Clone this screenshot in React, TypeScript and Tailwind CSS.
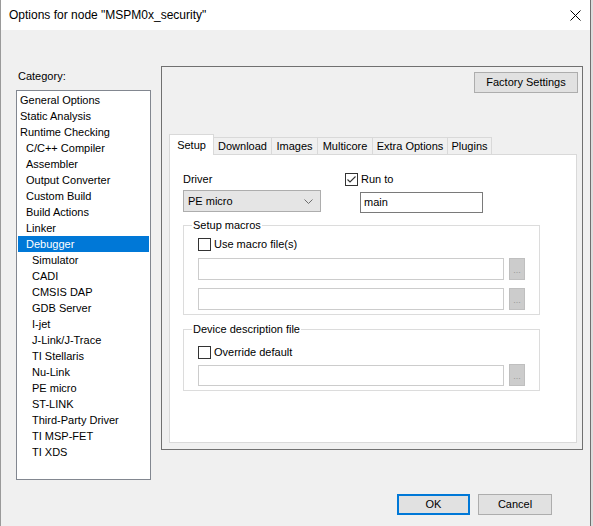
import React from 'react';

const categories: { label: string; level: number }[] = [
    { label: 'General Options', level: 0 },
    { label: 'Static Analysis', level: 0 },
    { label: 'Runtime Checking', level: 0 },
    { label: 'C/C++ Compiler', level: 1 },
    { label: 'Assembler', level: 1 },
    { label: 'Output Converter', level: 1 },
    { label: 'Custom Build', level: 1 },
    { label: 'Build Actions', level: 1 },
    { label: 'Linker', level: 1 },
    { label: 'Debugger', level: 1 },
    { label: 'Simulator', level: 2 },
    { label: 'CADI', level: 2 },
    { label: 'CMSIS DAP', level: 2 },
    { label: 'GDB Server', level: 2 },
    { label: 'I-jet', level: 2 },
    { label: 'J-Link/J-Trace', level: 2 },
    { label: 'TI Stellaris', level: 2 },
    { label: 'Nu-Link', level: 2 },
    { label: 'PE micro', level: 2 },
    { label: 'ST-LINK', level: 2 },
    { label: 'Third-Party Driver', level: 2 },
    { label: 'TI MSP-FET', level: 2 },
    { label: 'TI XDS', level: 2 },
];

const tabs = [
    { label: 'Setup', w: 'w-[45px]' },
    { label: 'Download', w: 'w-[58px]' },
    { label: 'Images', w: 'w-[46px]' },
    { label: 'Multicore', w: 'w-[55px]' },
    { label: 'Extra Options', w: 'w-[75px]' },
    { label: 'Plugins', w: 'w-[44px]' },
];

const indent = ['pl-[2px]', 'pl-[8px]', 'pl-[14px]'];

const CheckBox: React.FC<{ checked?: boolean; label: string }> = ({ checked, label }) => (
    <div className="flex items-center h-[13px]">
        <div className="w-[13px] h-[13px] border border-[#333333] bg-white flex items-center justify-center">
            {checked && (
                <svg width="11" height="11" viewBox="0 0 11 11">
                    <path d="M1.5 5.5 L4 8 L9.5 2.5" fill="none" stroke="#333333" strokeWidth="1.1" />
                </svg>
            )}
        </div>
        <span className="ml-[3px] leading-[13px]">{label}</span>
    </div>
);

const BrowseRow: React.FC<{ h?: string }> = ({ h = 'h-[22px]' }) => (
    <div className="flex items-center">
        <div className={`w-[306px] ${h} border border-[#cccccc] bg-white`}></div>
        <div className="ml-[5px] w-[16px] h-[22px] border border-[#bfbfbf] bg-[#cccccc] flex items-end justify-center pb-[4px] text-[9px] leading-none text-[#9a9a9a]">
            ...
        </div>
    </div>
);

const App: React.FC = () => {
    return (
        <div className="w-[593px] h-[526px] bg-[#dcdcdc] font-['Liberation_Sans',Arial,sans-serif] text-[11px] text-black">
            <div className="w-[591px] h-full border-l border-l-[#9a9a9a] border-r border-r-[#6f6f6f] flex flex-col">
                {/* title bar */}
                <div className="h-[30px] bg-white flex items-center justify-between pl-[8px] pr-[9px]">
                    <span className="text-[12px]">Options for node "MSPM0x_security"</span>
                    <svg width="11" height="11" viewBox="0 0 11 11">
                        <path d="M0.5 0.5 L10.5 10.5 M10.5 0.5 L0.5 10.5" stroke="#000" strokeWidth="1" />
                    </svg>
                </div>

                <div className="flex-1 bg-[#f0f0f0] pt-[36px] pl-[15px] flex flex-col">
                    <div className="flex items-start">
                        {/* category list */}
                        <div className="w-[135px] flex flex-col">
                            <div className="mt-[3px] leading-[14px] h-[14px] pl-[2px]">Category:</div>
                            <div className="mt-[7px] h-[390px] border border-[#828790] bg-white p-[1px]">
                                {categories.map(c => (
                                    <div
                                        key={c.label}
                                        className={`h-[16px] leading-[16px] whitespace-nowrap ${indent[c.level]} ${c.label === 'Debugger' ? 'bg-[#0078d7] text-white' : ''}`}
                                    >
                                        {c.label}
                                    </div>
                                ))}
                            </div>
                        </div>

                        {/* options panel */}
                        <div className="ml-[10px] w-[422px] h-[384px] border border-[#707070] flex flex-col">
                            <div className="flex justify-end pr-[4px] mt-[5px]">
                                <div className="w-[104px] h-[21px] border border-[#adadad] bg-[#e1e1e1] flex items-center justify-center">
                                    Factory Settings
                                </div>
                            </div>

                            <div className="mt-[41px] pl-[7px]">
                                <div className="flex items-end h-[20px] relative z-10">
                                    {tabs.map((t, i) => (
                                        <div
                                            key={t.label}
                                            className={`${t.w} flex items-center justify-center leading-[13px] ${
                                                i === 0
                                                    ? 'h-[21px] -mb-px bg-white border-l border-t border-r border-[#d9d9d9]'
                                                    : 'h-[17px] bg-[#f0f0f0] border-t border-r border-[#d9d9d9]'
                                            }`}
                                        >
                                            {t.label}
                                        </div>
                                    ))}
                                </div>

                                <div className="w-[408px] h-[289px] border border-[#d9d9d9] bg-white pl-[13px] pt-[18px]">
                                    <div className="flex items-start">
                                        <div className="w-[138px] flex flex-col">
                                            <div className="h-[13px] leading-[13px]">Driver</div>
                                            <div className="mt-[4px] h-[22px] border border-[#adadad] bg-[#e5e5e5] flex items-center justify-between pl-[4px] pr-[7px]">
                                                <span>PE micro</span>
                                                <svg width="9" height="5" viewBox="0 0 9 5">
                                                    <path d="M0.5 0.5 L4.5 4.5 L8.5 0.5" fill="none" stroke="#6d6d6d" strokeWidth="1" />
                                                </svg>
                                            </div>
                                        </div>
                                        <div className="ml-[24px] flex flex-col">
                                            <CheckBox checked label="Run to" />
                                            <div className="ml-[15px] mt-[6px] w-[123px] h-[21px] border border-[#7a7a7a] bg-white flex items-center pl-[3px]">
                                                main
                                            </div>
                                        </div>
                                    </div>

                                    <fieldset className="mt-[6px] w-[357px] border border-[#dcdcdc]">
                                        <legend className="ml-[8px] px-[1px] leading-[13px]">Setup macros</legend>
                                        <div className="pl-[14px] pt-[6px] pb-[4px]">
                                            <CheckBox label="Use macro file(s)" />
                                            <div className="mt-[7px]">
                                                <BrowseRow />
                                            </div>
                                            <div className="mt-[8px]">
                                                <BrowseRow />
                                            </div>
                                        </div>
                                    </fieldset>

                                    <fieldset className="mt-[8px] w-[357px] border border-[#dcdcdc]">
                                        <legend className="ml-[8px] px-[1px] leading-[13px]">Device description file</legend>
                                        <div className="pl-[14px] pt-[10px] pb-[4px]">
                                            <CheckBox label="Override default" />
                                            <div className="mt-[5px]">
                                                <BrowseRow h="h-[21px]" />
                                            </div>
                                        </div>
                                    </fieldset>
                                </div>
                            </div>
                        </div>
                    </div>

                    {/* dialog buttons */}
                    <div className="mt-[14px] flex justify-end gap-[8px] pr-[38px]">
                        <div className="w-[73px] h-[21px] border-2 border-[#0078d7] bg-[#e1e1e1] flex items-center justify-center">
                            OK
                        </div>
                        <div className="w-[74px] h-[21px] border border-[#adadad] bg-[#e1e1e1] flex items-center justify-center">
                            Cancel
                        </div>
                    </div>
                </div>
            </div>
        </div>
    );
};

export default App;
